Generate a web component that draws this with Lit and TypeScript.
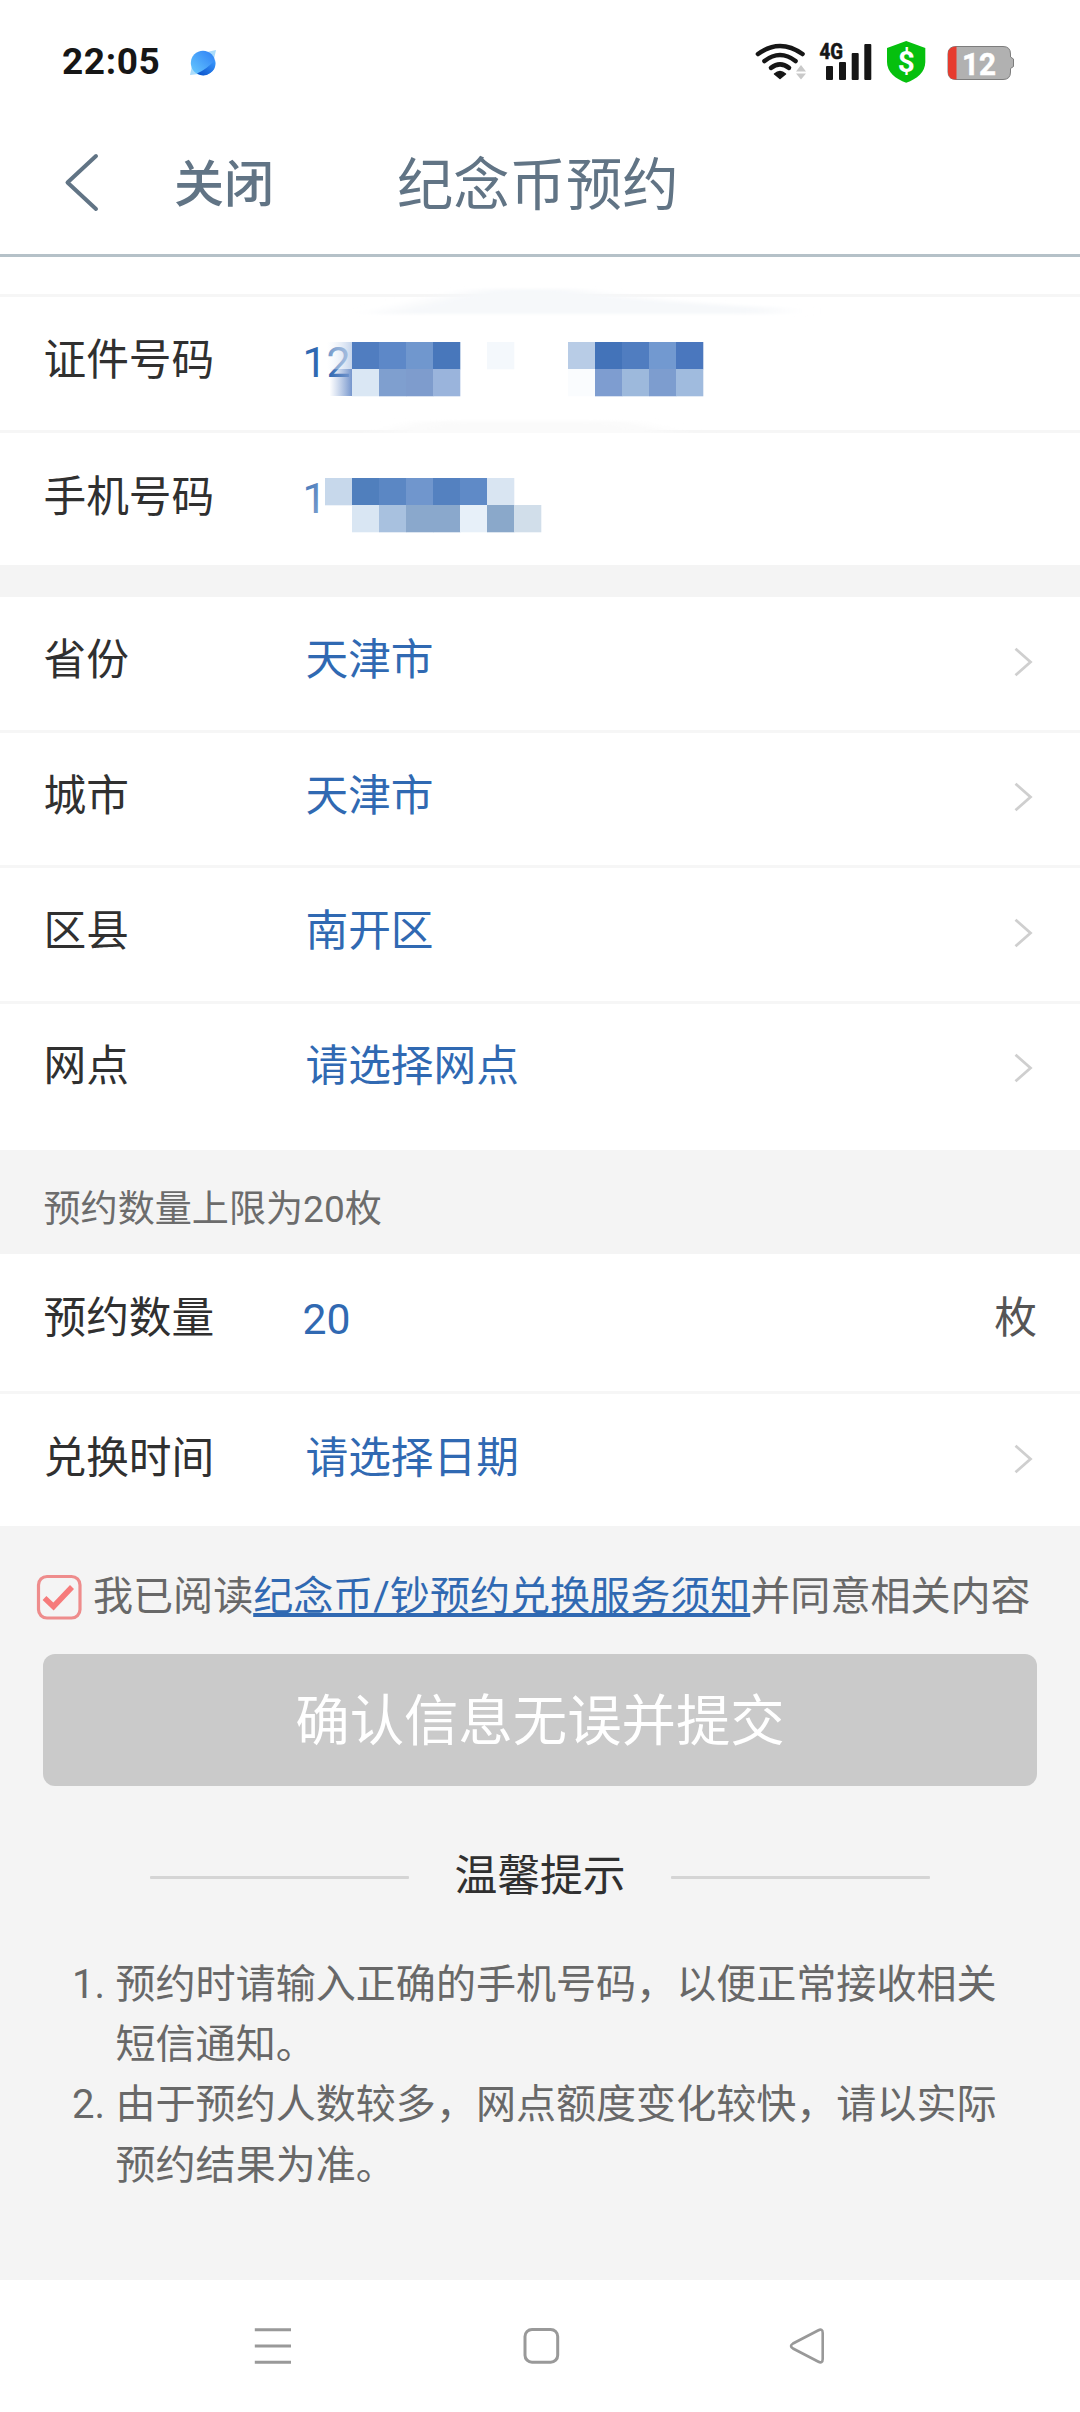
import { LitElement, html, svg, css, nothing } from "lit";
import { customElement, property } from "lit/decorators.js";

type Cell = [number, number, string];

/* Redaction tiles: column, row, colour. Each tile is 27px wide. */
const ID_TILES: Cell[] = [
  [1, 0, "#507dc0"], [2, 0, "#5d88c8"], [3, 0, "#7097ce"], [4, 0, "#4877bb"],
  [6, 0, "#f4f8fc"], [9, 0, "#b8cce6"], [10, 0, "#4373b9"], [11, 0, "#507dc0"],
  [12, 0, "#7299d0"], [13, 0, "#4a77be"],
  [1, 1, "#dae7f4"], [2, 1, "#7f9fcf"], [3, 1, "#7e9ccd"], [4, 1, "#9ab4dc"],
  [9, 1, "#fafcfe"], [10, 1, "#7e9dd0"], [11, 1, "#9db9dc"], [12, 1, "#7d9dcf"], [13, 1, "#a0bbde"],
];
const PHONE_TILES: Cell[] = [
  [0, 0, "#c7d8eb"], [1, 0, "#507fbd"], [2, 0, "#5b87c4"], [3, 0, "#7096cd"],
  [4, 0, "#5481c0"], [5, 0, "#5f8ac7"], [6, 0, "#d9e5f2"],
  [1, 1, "#d9e6f3"], [2, 1, "#a8c1df"], [3, 1, "#8aa8cc"], [4, 1, "#8aa8cc"],
  [5, 1, "#e7f0f9"], [6, 1, "#8aa8ca"], [7, 1, "#d1deea"],
];

const tiles = (cells: Cell[]) =>
  cells.map(([c, r, fill]) => svg`<rect x=${c * 27} y=${r * 27} width="27.3" height="27.3" fill=${fill}></rect>`);

@customElement("status-bar")
class StatusBar extends LitElement {
  static styles = css`
    :host { display: block; }
    .bar { height: 112px; display: flex; align-items: flex-start; padding: 38px 64px 0 62px; box-sizing: border-box; background: #fff; }
    .time { font: 700 37px/48px Roboto, sans-serif; letter-spacing: 0.6px; color: #161616; }
    .globe { margin-left: 28.5px; margin-top: 11px; }
    .grow { flex: 1; }
    .icons { display: block; }
    .t4g { font: 700 22.5px Roboto, sans-serif; stroke: #161616; stroke-width: 0.6px; }
    .dollar { font: 700 30px Roboto, sans-serif; }
    .pct { font: 700 31.5px Roboto, sans-serif; stroke: #fff; stroke-width: 0.5px; }
  `;
  render() {
    return html`<div class="bar">
      <span class="time">22:05</span>
      <svg class="globe" width="28" height="28" viewBox="0 0 28 28">
        <defs>
          <linearGradient id="g1" x1="1" y1="0" x2="0" y2="1"><stop offset="0" stop-color="#2c7df5"/><stop offset="1" stop-color="#69ccff"/></linearGradient>
          <linearGradient id="g2" x1="1" y1="0" x2="0" y2="1"><stop offset="0" stop-color="#3a9bff"/><stop offset="1" stop-color="#0a4fc8"/></linearGradient>
        </defs>
        <path d="M3 17 L1 26 L10 25 Z M18 3 L27 1 L25 10 Z" fill="#aadcfb"/>
        <circle cx="14" cy="14" r="12.2" fill="url(#g1)"/>
        <path d="M26 11 A12.2 12.2 0 0 1 8 24.6 Q18 20 26 11 Z" fill="url(#g2)"/>
      </svg>
      <span class="grow"></span>
      <svg class="icons" width="262" height="48" viewBox="754 38 262 48">
        <g fill="none" stroke="#161616" stroke-width="4.6" stroke-linecap="round">
          <path d="M758 54 Q780 38 802.500 54"/>
          <path d="M764.500 61 Q780 49 795.500 61"/>
          <path d="M771 67.800 Q780 61 789 67.800"/>
        </g>
        <path d="M774.500 74 Q780 69 785.500 74 L780 78.500 Z" fill="#161616" stroke="#161616" stroke-width="1.500" stroke-linejoin="round"/>
        <path d="M801 65 L806 71.500 H796 Z M801 79.500 L806 73.500 H796 Z" fill="#c9c9c9"/>
        <text class="t4g" x="819.500" y="59" textLength="23.500" lengthAdjust="spacingAndGlyphs" fill="#161616">4G</text>
        <g fill="#161616">
          <rect x="826" y="66" width="7" height="14" rx="1"/><rect x="839" y="62" width="7" height="18" rx="1"/>
          <rect x="851.700" y="53" width="7" height="27" rx="1"/><rect x="864.300" y="44" width="7" height="36" rx="1"/>
        </g>
        <path d="M906.200 41 L925.300 48 V62 C925.300 72 917 79 906.200 82.800 C895.500 79 887 72 887 62 V48 Z" fill="#06c00e"/>
        <text class="dollar" x="897.700" y="72.300" textLength="17" lengthAdjust="spacingAndGlyphs" fill="#fff">$</text>
        <path d="M956 46.500 H1003 Q1010.500 46.500 1010.500 54 V57 L1013.500 59 V66.500 L1010.500 68.500 V72 Q1010.500 79.500 1003 79.500 H956 Q948 79.500 948 72 V54 Q948 46.500 956 46.500 Z" fill="#b1b1b1" stroke="#7d7d7d" stroke-width="1"/>
        <path d="M956.500 46.500 V79.500 Q948 79.500 948 72 V54 Q948 46.500 956.500 46.500 Z" fill="#e63b2e"/>
        <text class="pct" x="962" y="74.500" textLength="34" lengthAdjust="spacingAndGlyphs" fill="#fff">12</text>
      </svg>
    </div>`;
  }
}

@customElement("form-row")
class FormRow extends LitElement {
  @property() label = "";
  @property() value = "";
  @property() unit = "";
  @property({ type: Boolean }) arrow = false;
  static styles = css`
    :host { display: block; box-sizing: border-box; background: #fff; border-bottom: 3px solid #f6f6f6; position: relative; }
    .row { height: 100%; box-sizing: border-box; display: flex; align-items: center; padding: 0 43px 0 43.5px; }
    .label { width: 262px; font-size: 42.7px; line-height: 60px; padding-bottom: 3px; color: #303030; }
    .value { flex: 1; font-size: 42.7px; line-height: 60px; padding-bottom: 3px; color: #3069b2; }
    .digits { margin-left: -3px; padding-bottom: 0; }
    .unit { font-size: 42.7px; line-height: 60px; padding-bottom: 3px; color: #555; }
    .chev { margin-right: 4px; }
  `;
  render() {
    return html`<div class="row">
      <span class="label">${this.label}</span>
      <span class="value ${/^\d+$/.test(this.value) ? "digits" : ""}">${this.value}</span>
      ${this.unit ? html`<span class="unit">${this.unit}</span>` : nothing}
      ${this.arrow
        ? html`<svg class="chev" width="20" height="30" viewBox="0 0 20 30"><path d="M2.500 1.700 L17.500 15 L2.500 28.300" fill="none" stroke="#cfcfcf" stroke-width="2.800"/></svg>`
        : nothing}
      <slot></slot>
    </div>`;
  }
}

@customElement("app-root")
class AppRoot extends LitElement {
  static styles = css`
    :host { display: block; width: 1080px; height: 2412px; overflow: hidden; background: #f4f4f4; font-family: Roboto, "Noto Sans CJK SC", sans-serif; }
    .head { height: 145px; box-sizing: border-box; border-bottom: 3px solid #b5c1c8; background: #fff; display: flex; align-items: center; padding: 0 0 0 64px; color: #617485; }
    .back { margin-top: -3px; }
    .close { font-size: 50px; font-weight: 500; line-height: 70px; margin-left: 74px; width: 223px; padding-top: 4px; }
    .title { font-size: 56.3px; line-height: 80px; padding-top: 5px; }
    .sliver { height: 40px; box-sizing: border-box; background: #fff; border-bottom: 3px solid #f6f6f6; }
    .r-id { height: 136px; padding-bottom: 4px; }
    .r-phone { height: 132px; padding-bottom: 2px; border-bottom: 0; }
    .r-prov, .r-dist { height: 136px; padding-bottom: 4px; }
    .r-city { height: 135px; padding-bottom: 4px; }
    .r-site { height: 146px; padding-bottom: 19px; border-bottom: 0; }
    .r-qty { height: 140px; padding-bottom: 7px; }
    .r-date { height: 132px; padding-bottom: 2px; border-bottom: 0; }
    .gap { height: 32px; }
    .note { height: 104px; box-sizing: border-box; padding: 34px 0 0 43.5px; font-size: 37.1px; line-height: 52px; color: #6c6c6c; }
    .mask { position: absolute; left: 324.5px; overflow: visible; }
    .mask-id { top: 45px; }
    .mask-phone { top: 45px; }
    .agree { height: 128px; box-sizing: border-box; padding: 41px 0 0 36px; display: flex; align-items: flex-start; color: #686868; }
    .box { margin-top: 7px; }
    .terms { font-size: 40.05px; line-height: 60px; margin-left: 11px; white-space: nowrap; }
    .link { color: #3069b2; text-decoration: underline; text-decoration-thickness: 4px; text-underline-offset: 3px; text-decoration-skip-ink: none; }
    .submit { margin: 0 43px; height: 132px; box-sizing: border-box; padding-bottom: 7px; border-radius: 12px; background: #cacaca; color: #fff; font-size: 54.4px; display: flex; align-items: center; justify-content: center; }
    .tips { margin-top: 61px; height: 60px; display: flex; align-items: center; justify-content: center; gap: 45.5px; font-size: 42.8px; line-height: 60px; color: #303030; }
    .tips-title { padding-bottom: 3px; }
    .rule { width: 259px; height: 3px; background: #d5d5d5; border-radius: 1px; }
    .list { margin: 47.5px 0 0; height: 325.5px; padding: 0; list-style: none; font-size: 40.05px; line-height: 60.4px; color: #686868; }
    .item { display: flex; padding-left: 72px; }
    .num { width: 43.5px; }
    .body { width: 890px; }
    .nav { display: block; height: 132px; background: #fff; }
  `;
  render() {
    return html`
      <status-bar></status-bar>
      <header class="head">
        <svg class="back" width="36" height="60" viewBox="0 0 36 60"><path d="M32 4 L3.500 30.500 L32 57" fill="none" stroke="#617485" stroke-width="4" stroke-linecap="round" stroke-linejoin="round"/></svg>
        <span class="close">关闭</span>
        <span class="title">纪念币预约</span>
      </header>
      <div class="sliver"></div>
      <form-row class="r-id" label="证件号码" value="12">
        <svg class="mask mask-id" width="378" height="54" viewBox="0 0 378 54">
          <defs>
            <linearGradient id="fade"><stop offset="0" stop-color="#fff" stop-opacity="0.3"/><stop offset="1" stop-color="#b9cce8" stop-opacity="0.85"/></linearGradient>
            <linearGradient id="fade2"><stop offset="0.1" stop-color="#8aa6d4" stop-opacity="0"/><stop offset="1" stop-color="#7394cc"/></linearGradient>
            <filter id="soft" x="-15%" y="-60%" width="130%" height="220%"><feGaussianBlur stdDeviation="18 1.500"/></filter>
          </defs>
          <path d="M50 -28 Q110 -44 160 -53 H250 Q300 -42 452 -34 V-28 Z" fill="#f6f8fa" filter="url(#soft)"/>
          <path d="M20 106 Q50 92 100 79 H300 Q350 90 390 106 Z" fill="#fafafa" filter="url(#soft)"/>
          <rect x="2" y="0" width="25.300" height="27.300" fill="url(#fade)"/>
          <rect x="2" y="27" width="25.300" height="27" fill="url(#fade2)"/>
          ${tiles(ID_TILES)}
        </svg>
      </form-row>
      <form-row class="r-phone" label="手机号码" value="1">
        <svg class="mask mask-phone" width="216" height="54" viewBox="0 0 216 54">
          <defs><linearGradient id="veil" x1="0" y1="0" x2="1" y2="1"><stop offset="0" stop-color="#fff" stop-opacity="0.1"/><stop offset="1" stop-color="#fff" stop-opacity="0.4"/></linearGradient></defs>
          <rect x="-20" y="0" width="20" height="40" fill="url(#veil)"/>
          ${tiles(PHONE_TILES)}
        </svg>
      </form-row>
      <div class="gap"></div>
      <form-row class="r-prov" label="省份" value="天津市" arrow></form-row>
      <form-row class="r-city" label="城市" value="天津市" arrow></form-row>
      <form-row class="r-dist" label="区县" value="南开区" arrow></form-row>
      <form-row class="r-site" label="网点" value="请选择网点" arrow></form-row>
      <div class="note">预约数量上限为20枚</div>
      <form-row class="r-qty" label="预约数量" value="20" unit="枚"></form-row>
      <form-row class="r-date" label="兑换时间" value="请选择日期" arrow></form-row>
      <div class="agree">
        <svg class="box" width="46" height="46" viewBox="0 0 46 46">
          <rect x="2.500" y="2.500" width="41.500" height="41.500" rx="8.500" fill="none" stroke="#ee8c8c" stroke-width="3.200"/>
          <path d="M8.500 24 L17.500 32.500 L36 13" fill="none" stroke="#f67b7b" stroke-width="5.500"/>
        </svg>
        <span class="terms">我已阅读<span class="link">纪念币/钞预约兑换服务须知</span>并同意相关内容</span>
      </div>
      <div class="submit">确认信息无误并提交</div>
      <div class="tips"><i class="rule"></i><span class="tips-title">温馨提示</span><i class="rule"></i></div>
      <ol class="list">
        <li class="item"><span class="num">1.</span><span class="body">预约时请输入正确的手机号码，以便正常接收相关短信通知。</span></li>
        <li class="item"><span class="num">2.</span><span class="body">由于预约人数较多，网点额度变化较快，请以实际预约结果为准。</span></li>
      </ol>
      <svg class="nav" width="1080" height="132" viewBox="0 0 1080 132">
        <g fill="none" stroke="#999" stroke-width="3">
          <path d="M254.800 49.700 H291 M254.800 66 H291 M254.800 82.300 H291"/>
          <rect x="525" y="49.500" width="32.700" height="32.700" rx="7"/>
          <path d="M818 50.500 Q822.700 48 822.700 53 V79 Q822.700 84 818 81.500 L793 68.500 Q789 66 793 63.500 Z" stroke-width="2.600"/>
        </g>
      </svg>
    `;
  }
}
